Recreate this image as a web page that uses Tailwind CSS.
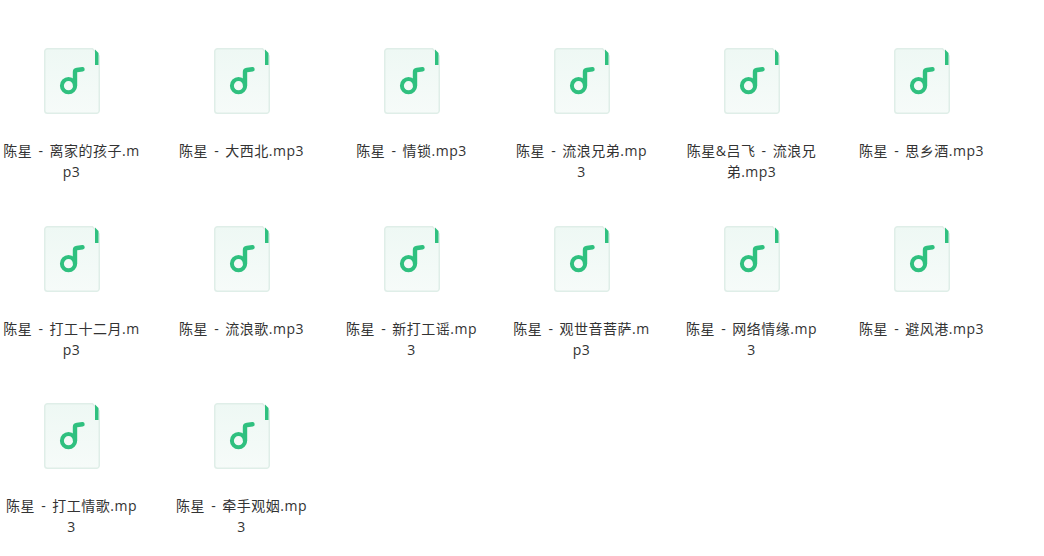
<!DOCTYPE html>
<html lang="zh">
<head>
    <meta charset="UTF-8">
    <title>陈星</title>
    <script src="https://cdn.jsdelivr.net/npm/@tailwindcss/browser@4"></script>
</head>
<body class="bg-white">
    <svg class="absolute w-0 h-0">
        <defs>
            <linearGradient id="page" x1="0" y1="0" x2="0" y2="1">
                <stop offset="0" stop-color="#eef8f4"/>
                <stop offset="1" stop-color="#f6fbf9"/>
            </linearGradient>
        </defs>
        <symbol id="mp3" viewBox="0 0 56 66">
            <path d="M3.5 .75H48.5L55.25 8V62.5A2.75 2.75 0 0 1 52.5 65.25H3.5A2.75 2.75 0 0 1 .75 62.5V3.5A2.75 2.75 0 0 1 3.5 .75Z" fill="url(#page)" stroke="#dfeee8" stroke-width="1.5"/>
            <path d="M51 1.5L54.5 5V17H51Z" fill="#2fc07f"/>
            <circle cx="24.5" cy="37.7" r="6.6" fill="none" stroke="#2fc07f" stroke-width="4"/>
            <path d="M31 37.7V24C31 22.8 31.8 22.2 33 22L38.5 21.2" fill="none" stroke="#2fc07f" stroke-width="4.4" stroke-linecap="round"/>
        </symbol>
    </svg>
    <div class="grid grid-cols-[repeat(6,139px)] auto-rows-[177.5px] gap-x-[31px] pl-[2px] pt-[48px] text-[14px] leading-[21px] text-[#333] text-center tracking-[0.5px] [word-spacing:2px] font-['Open_Sans','Noto_Sans_CJK_SC',sans-serif]">
        <div><svg class="w-[56px] h-[66px] mx-auto mb-[26px]"><use href="#mp3"/></svg><p class="break-all">陈星 - 离家的孩子.mp3</p></div>
        <div><svg class="w-[56px] h-[66px] mx-auto mb-[26px]"><use href="#mp3"/></svg><p class="break-all">陈星 - 大西北.mp3</p></div>
        <div><svg class="w-[56px] h-[66px] mx-auto mb-[26px]"><use href="#mp3"/></svg><p class="break-all">陈星 - 情锁.mp3</p></div>
        <div><svg class="w-[56px] h-[66px] mx-auto mb-[26px]"><use href="#mp3"/></svg><p class="break-all">陈星 - 流浪兄弟.mp3</p></div>
        <div><svg class="w-[56px] h-[66px] mx-auto mb-[26px]"><use href="#mp3"/></svg><p class="break-all">陈星&amp;吕飞 - 流浪兄弟.mp3</p></div>
        <div><svg class="w-[56px] h-[66px] mx-auto mb-[26px]"><use href="#mp3"/></svg><p class="break-all">陈星 - 思乡酒.mp3</p></div>
        <div><svg class="w-[56px] h-[66px] mx-auto mb-[26px]"><use href="#mp3"/></svg><p class="break-all">陈星 - 打工十二月.mp3</p></div>
        <div><svg class="w-[56px] h-[66px] mx-auto mb-[26px]"><use href="#mp3"/></svg><p class="break-all">陈星 - 流浪歌.mp3</p></div>
        <div><svg class="w-[56px] h-[66px] mx-auto mb-[26px]"><use href="#mp3"/></svg><p class="break-all">陈星 - 新打工谣.mp3</p></div>
        <div><svg class="w-[56px] h-[66px] mx-auto mb-[26px]"><use href="#mp3"/></svg><p class="break-all">陈星 - 观世音菩萨.mp3</p></div>
        <div><svg class="w-[56px] h-[66px] mx-auto mb-[26px]"><use href="#mp3"/></svg><p class="break-all">陈星 - 网络情缘.mp3</p></div>
        <div><svg class="w-[56px] h-[66px] mx-auto mb-[26px]"><use href="#mp3"/></svg><p class="break-all">陈星 - 避风港.mp3</p></div>
        <div><svg class="w-[56px] h-[66px] mx-auto mb-[26px]"><use href="#mp3"/></svg><p class="break-all">陈星 - 打工情歌.mp3</p></div>
        <div><svg class="w-[56px] h-[66px] mx-auto mb-[26px]"><use href="#mp3"/></svg><p class="break-all">陈星 - 牵手观姻.mp3</p></div>
    </div>
</body>
</html>
